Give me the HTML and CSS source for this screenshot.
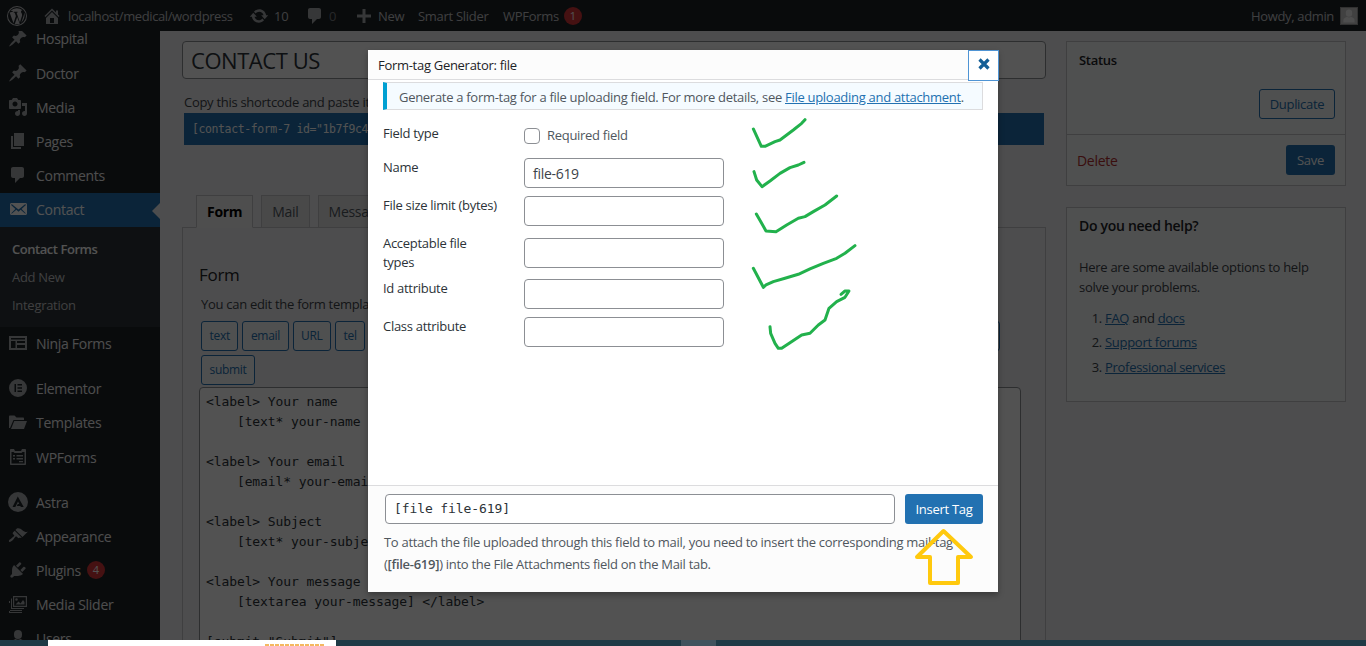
FILE: index.html
```html
<!DOCTYPE html>
<html lang="en">
<head>
<meta charset="utf-8">
<title>Edit Contact Form</title>
<link rel="stylesheet" href="styles.css">
</head>
<body>
<svg class="defs" aria-hidden="true">
  <symbol id="i-wp" viewBox="0 0 20 20"><path fill-rule="evenodd" d="M10 0a10 10 0 1 1 0 20a10 10 0 0 1 0-20zm0 1a9 9 0 1 0 0 18a9 9 0 0 0 0-18zM2.6 6.6l3.9 10.6L8.9 10 7.7 6.7l-1-.1v-.8h3.9v.8l-1 .1 3.3 9.8 2-6.3c.4-1.4.1-2.3-.4-3.1-.5-.8-.8-1.700.1-2.500.3-.3.6-.4.9-.4A9 9 0 0 0 3.500 4.900h2.300v.9l-1.100.1 0 0zM10.200 11l-2.400 7a8.800 8.800 0 0 0 5 -.1zM17.300 6.500c.6 2.500.3 4.800-.8 7l-2.300 3.400 2.200-6.300c.5-1.300.8-2.800.9-4.100z"/></symbol>
  <symbol id="i-home" viewBox="0 0 20 20"><path d="M16 8.500l1.530 1.530-1.060 1.060L10 4.620l-6.470 6.470-1.060-1.060L10 2.500l4 4v-2h2v4zm-6-2.460l6 5.990V18H4v-5.970zM12 17v-5H8v5h4z"/></symbol>
  <symbol id="i-update" viewBox="0 0 20 20"><path d="M10.200 3.280c3.530 0 6.430 2.610 6.920 6h2.080l-3.500 4-3.500-4h2.320c-.45-1.970-2.210-3.450-4.320-3.450-1.450 0-2.730.71-3.540 1.780L4.950 5.660C6.230 4.200 8.110 3.280 10.200 3.280zm-.4 13.440c-3.520 0-6.430-2.610-6.920-6H.8l3.500-4c1.170 1.330 2.330 2.670 3.500 4H5.480c.45 1.970 2.210 3.450 4.320 3.450 1.450 0 2.730-.71 3.540-1.780l1.710 1.950c-1.280 1.460-3.150 2.380-5.250 2.380z"/></symbol>
  <symbol id="i-comment" viewBox="0 0 20 20"><path d="M5 2h9c1.100 0 2 .9 2 2v7c0 1.100-.9 2-2 2h-2l-5 5v-5H5c-1.100 0-2-.9-2-2V4c0-1.100.9-2 2-2z"/></symbol>
  <symbol id="i-plus" viewBox="0 0 20 20"><path d="M17 8.500v3h-5.500V17h-3v-5.500H3v-3h5.500V3h3v5.500z"/></symbol>
  <symbol id="i-pin" viewBox="0 0 20 20"><path d="M10.440 3.020l1.820-1.820 6.360 6.350-1.830 1.820c-1.050-.68-2.480-.57-3.410.36l-.75.75c-.92.93-1.040 2.350-.35 3.410l-1.830 1.820-2.410-2.410-2.800 2.790c-.42.42-3.380 2.710-3.800 2.290s1.860-3.390 2.280-3.810l2.790-2.790L4.100 9.360l1.830-1.820c1.050.69 2.480.57 3.410-.36l.75-.75c.93-.92 1.050-2.350.35-3.410z"/></symbol>
  <symbol id="i-media" viewBox="0 0 20 20"><path d="M13 11V4c0-.55-.45-1-1-1h-1.670L9 1H5L3.670 3H2c-.55 0-1 .45-1 1v7c0 .55.45 1 1 1h10c.55 0 1-.45 1-1zM7 4.500c1.380 0 2.500 1.120 2.500 2.500S8.380 9.500 7 9.500 4.500 8.380 4.500 7 5.620 4.500 7 4.500zM14 6h5v10.500c0 1.380-1.120 2.500-2.500 2.500S14 17.880 14 16.500s1.120-2.500 2.500-2.500c.17 0 .34.020.5.050V9h-3V6zm-4 8.050V13h2v3.500c0 1.380-1.120 2.500-2.500 2.500S7 17.880 7 16.500 8.120 14 9.500 14c.17 0 .34.020.5.050z"/></symbol>
  <symbol id="i-page" viewBox="0 0 20 20"><path d="M6 15V2h10v13H6zm-1 1h8v2H3V5h2v11z"/></symbol>
  <symbol id="i-mail" viewBox="0 0 20 20"><path d="M19 14.500v-9c0-.83-.67-1.500-1.500-1.500H3.490c-.83 0-1.500.67-1.500 1.500v9c0 .83.67 1.500 1.500 1.500H17.500c.83 0 1.500-.67 1.500-1.500zm-1.310-9.110c.33.33.15.67-.03.84L13.600 9.950l3.900 4.060c.12.14.2.36.060.51-.13.16-.43.15-.56.050l-4.370-3.730-2.140 1.950-2.130-1.950-4.370 3.730c-.13.1-.43.11-.56-.05-.14-.15-.06-.37.060-.51l3.900-4.060-4.060-3.720c-.18-.17-.36-.51-.03-.84s.67-.17.95.070l6.240 5.040 6.250-5.040c.28-.24.62-.4.95-.07z"/></symbol>
  <symbol id="i-ninja" viewBox="0 0 20 20"><path fill-rule="evenodd" d="M1 3h18v14H1zM3 8v7h4.500V8zM9 8v2h8V8zM9 12v3h8v-3zM3 5v1.500h14V5z"/></symbol>
  <symbol id="i-elementor" viewBox="0 0 20 20"><path fill-rule="evenodd" d="M10 1a9 9 0 1 1 0 18a9 9 0 0 1 0-18zM6.500 6v8H8V6zM9.500 6v1.500H14V6zM9.500 9.200v1.600H14V9.200zM9.500 12.500V14H14v-1.500z"/></symbol>
  <symbol id="i-folder" viewBox="0 0 20 20"><path d="M1 16V4.500C1 4 1.400 3.500 2 3.500h4.500l2 2H15c.6 0 1 .4 1 1V8H5.500L2 16zM3 17l3.200-8H19l-3 8z"/></symbol>
  <symbol id="i-wpforms" viewBox="0 0 20 20"><path fill-rule="evenodd" d="M3 2h3l1 2h6l1-2h3c.6 0 1 .5 1 1v14c0 .6-.4 1-1 1H3c-.6 0-1-.4-1-1V3c0-.5.4-1 1-1zM3.500 5v11.500h13V5H14.500l-1 1H6.500l-1-1zM5 8h2v1.500H5zM8.500 8H15v1.500H8.500zM5 11h2v1.500H5zM8.500 11H15v1.500H8.500zM11 14h4v1.200h-4z"/></symbol>
  <symbol id="i-astra" viewBox="0 0 20 20"><path fill-rule="evenodd" d="M10 0a10 10 0 1 1 0 20a10 10 0 0 1 0-20zM9.800 4.500L4.500 15h2.800l2.700-5.600 1.300 2.600h-1.500l-1 2h3.500l.6 1h2.800z"/></symbol>
  <symbol id="i-brush" viewBox="0 0 20 20"><path d="M14.480 11.060L7.410 3.990l1.500-1.500c.5-.56 2.300-.47 3.510.32 1.210.8 1.430 1.280 2.910 2.100 1.180.64 2.450 1.260 4.450.85zm-.71.71L6.700 4.700 4.930 6.470c-.39.39-.39 1.020 0 1.410l1.060 1.060c.39.39.39 1.030 0 1.420-.6.6-1.430 1.110-2.210 1.690-.35.26-.7.53-1.010.84C1.430 13.230.4 14.980 1.100 15.680c.71.71 2.450-.32 3.790-1.670.31-.31.58-.66.85-1.020.57-.78 1.080-1.610 1.690-2.210.39-.39 1.020-.39 1.410 0l1.060 1.060c.39.39 1.020.39 1.410 0z"/></symbol>
  <symbol id="i-plug" viewBox="0 0 20 20"><path d="M13.110 4.360L9.870 7.600 8 5.730l3.240-3.240c.35-.34 1.050-.2 1.560.32.52.51.66 1.210.31 1.550zm-8 1.770l.91-1.120 9.010 9.010-1.190.84c-.71.71-2.630 1.160-3.820 1.160H6.140L4.900 17.260c-.59.59-1.540.59-2.120 0-.59-.58-.59-1.530 0-2.120l1.240-1.240v-3.880c0-1.130.4-3.190 1.090-3.890zm7.260 3.970l3.240-3.240c.34-.35 1.040-.21 1.550.31.520.51.66 1.210.31 1.550l-3.240 3.250z"/></symbol>
  <symbol id="i-slider" viewBox="0 0 20 20"><path fill-rule="evenodd" d="M5 2h14v11H5zM6.200 3.200v8.600h11.600V3.200zM7.500 10.500l3-3 2 2 2.500-3.500 1.500 2v2.500zM8.500 4.200a1.300 1.300 0 1 1 0 2.600a1.300 1.300 0 0 1 0-2.600zM3 4.500h1v9.500h12v1H3zM1 7h1v9h12v1H1zM1 9v10h13v-1H2V9z"/></symbol>
  <symbol id="i-user" viewBox="0 0 20 20"><path d="M10 2a4 4 0 0 1 4 4v1a4 4 0 0 1-8 0V6a4 4 0 0 1 4-4zM3 18v-3c0-2 3-3.500 4.500-4 1.500 1 3.500 1 5 0 1.500.5 4.500 2 4.500 4v3z"/></symbol>
</svg>

<div class="screen">
  <div class="app">
    <header class="adminbar">
      <div class="bar-left">
        <span class="bar-item bar-logo"><svg class="ico ico-20"><use href="#i-wp"/></svg></span>
        <span class="bar-item bar-site"><svg class="ico ico-20"><use href="#i-home"/></svg>localhost/medical/wordpress</span>
        <span class="bar-item bar-updates"><svg class="ico ico-20"><use href="#i-update"/></svg>10</span>
        <span class="bar-item bar-comments"><svg class="ico ico-20"><use href="#i-comment"/></svg><span class="muted">0</span></span>
        <span class="bar-item bar-new"><svg class="ico ico-20"><use href="#i-plus"/></svg>New</span>
        <span class="bar-item bar-slider">Smart Slider</span>
        <span class="bar-item">WPForms<span class="count count-bar">1</span></span>
      </div>
      <div class="bar-right">Howdy, admin<span class="avatar"><svg viewBox="0 0 20 20"><use href="#i-user"/></svg></span></div>
    </header>

    <div class="layout">
      <nav class="sidebar">
        <ul class="menu">
          <li class="menu-item"><svg class="ico ico-20"><use href="#i-pin"/></svg>Hospital</li>
          <li class="menu-item step"><svg class="ico ico-20"><use href="#i-pin"/></svg>Doctor</li>
          <li class="menu-item"><svg class="ico ico-20"><use href="#i-media"/></svg>Media</li>
          <li class="menu-item"><svg class="ico ico-20"><use href="#i-page"/></svg>Pages</li>
          <li class="menu-item"><svg class="ico ico-20"><use href="#i-comment"/></svg>Comments</li>
          <li class="menu-item current"><svg class="ico ico-20"><use href="#i-mail"/></svg>Contact</li>
          <li class="submenu">
            <span class="sub-link sub-on">Contact Forms</span>
            <span class="sub-link">Add New</span>
            <span class="sub-link">Integration</span>
          </li>
          <li class="menu-item"><svg class="ico ico-20"><use href="#i-ninja"/></svg>Ninja Forms</li>
          <li class="menu-item sep"><svg class="ico ico-20"><use href="#i-elementor"/></svg>Elementor</li>
          <li class="menu-item"><svg class="ico ico-20"><use href="#i-folder"/></svg>Templates</li>
          <li class="menu-item step"><svg class="ico ico-20"><use href="#i-wpforms"/></svg>WPForms</li>
          <li class="menu-item sep"><svg class="ico ico-20"><use href="#i-astra"/></svg>Astra</li>
          <li class="menu-item"><svg class="ico ico-20"><use href="#i-brush"/></svg>Appearance</li>
          <li class="menu-item"><svg class="ico ico-20"><use href="#i-plug"/></svg>Plugins<span class="count count-menu">4</span></li>
          <li class="menu-item"><svg class="ico ico-20"><use href="#i-slider"/></svg>Media Slider</li>
          <li class="menu-item"><svg class="ico ico-20"><use href="#i-user"/></svg>Users</li>
        </ul>
      </nav>

      <main class="content">
        <div class="editor">
          <div class="title-input">CONTACT US</div>
          <p class="shortcode-note">Copy this shortcode and paste it into your post, page, or text widget content:</p>
          <div class="shortcode">[contact-form-7 id="1b7f9c4" title="CONTACT US"]</div>
          <div class="tabs">
            <span class="tab tab-on">Form</span>
            <span class="tab">Mail</span>
            <span class="tab">Messages</span>
            <span class="tab">Additional Settings</span>
          </div>
          <section class="panel">
            <h2 class="panel-title">Form</h2>
            <p class="panel-note">You can edit the form template here. For details, see Editing form template.</p>
            <div class="tag-line">
              <span class="tag">text</span><span class="tag">email</span><span class="tag">URL</span><span class="tag">tel</span><span class="tag">number</span><span class="tag">date</span><span class="tag">text area</span><span class="tag">drop-down menu</span><span class="tag">checkboxes</span><span class="tag">radio buttons</span><span class="tag">acceptance</span><span class="tag">quiz</span><span class="tag tag-last">file</span>
            </div>
            <div class="tag-line">
              <span class="tag">submit</span>
            </div>
            <pre class="template">&lt;label&gt; Your name
    [text* your-name ] &lt;/label&gt;

&lt;label&gt; Your email
    [email* your-email] &lt;/label&gt;

&lt;label&gt; Subject
    [text* your-subject] &lt;/label&gt;

&lt;label&gt; Your message (optional)
    [textarea your-message] &lt;/label&gt;

[submit "Submit"]</pre>
          </section>
        </div>

        <aside class="side">
          <section class="box box-status">
            <h3 class="box-title">Status</h3>
            <div class="status-actions"><span class="btn-outline">Duplicate</span></div>
            <div class="status-foot"><span class="delete">Delete</span><span class="btn-save">Save</span></div>
          </section>
          <section class="box box-help">
            <h3 class="help-title">Do you need help?</h3>
            <p class="help-text">Here are some available options to help solve your problems.</p>
            <ol class="help-list">
              <li><a>FAQ</a> and <a>docs</a></li>
              <li><a>Support forums</a></li>
              <li><a>Professional services</a></li>
            </ol>
          </section>
        </aside>
      </main>
    </div>

    <div class="backdrop"></div>

    <div class="modal">
      <div class="modal-head">
        <span class="modal-title">Form-tag Generator: file</span>
        <span class="modal-close"><svg viewBox="0 0 20 20"><path d="M5.500 5.500L14.500 14.500M14.500 5.500L5.500 14.500"/></svg></span>
      </div>
      <div class="notice">Generate a form-tag for a file uploading field. For more details, see <a>File uploading and attachment</a>.</div>
      <div class="fields">
        <div class="field field-check"><span class="field-label">Field type</span><label class="check"><span class="checkbox"></span>Required field</label></div>
        <div class="field"><span class="field-label">Name</span><span class="text-input">file-619</span></div>
        <div class="field"><span class="field-label">File size limit (bytes)</span><span class="text-input"></span></div>
        <div class="field field-tall"><span class="field-label">Acceptable file types</span><span class="text-input"></span></div>
        <div class="field"><span class="field-label">Id attribute</span><span class="text-input"></span></div>
        <div class="field"><span class="field-label">Class attribute</span><span class="text-input"></span></div>
      </div>
      <div class="modal-foot">
        <div class="foot-row"><span class="tag-output">[file file-619]</span><span class="btn-insert">Insert Tag</span></div>
        <p class="foot-note">To attach the file uploaded through this field to mail, you need to insert the corresponding mail-tag (<strong>[file-619]</strong>) into the File Attachments field on the Mail tab.</p>
      </div>
    </div>

    <svg class="marks" viewBox="0 0 1366 640" aria-hidden="true">
      <g class="ticks" transform="translate(730 45) scale(.3333)">
        <polyline points="70,252 94,304 105,304 135,290 150,285 170,270 190,255 215,235 225,224"/>
        <polyline points="72,380 80,405 96,425 120,408 150,385 180,368 205,360 222,352"/>
        <polyline points="79,507 95,535 108,558 138,560 170,540 205,520 225,515 250,500 285,480 320,453"/>
        <polyline points="70,670 100,727 108,720 130,710 165,700 205,688 240,672 280,655 320,640 345,625 375,602"/>
        <polyline points="120,845 122,865 135,895 145,910 155,910 180,893 215,870 240,865 265,840 285,825 297,790 320,770 345,757 357,738 345,738 333,748"/>
      </g>
      <polygon class="arrow" points="943.500,531 971,557 958,557 958,583 930,583 930,557 917,557"/>
    </svg>
  </div>

  <footer class="taskbar">
    <div class="task-white"><span class="task-dots"></span></div>
    <div class="task-active"></div>
  </footer>
</div>
</body>
</html>
```

FILE: styles.css
```css
* { box-sizing: border-box; }
html, body { margin: 0; padding: 0; height: 100%; overflow: hidden; }
body { font-family: "Open Sans", "Noto Sans", sans-serif; font-size: 13px; color: #3c434a; background: #f0f0f1; letter-spacing: -.29px; }
.defs { display: none; }
.screen { display: flex; flex-direction: column; height: 646px; overflow: hidden; }
.app { position: relative; flex: 1; min-height: 0; overflow: hidden; background: #f0f0f1; }

.ico { fill: currentColor; flex: none; }
.ico-20 { width: 20px; height: 20px; }

/* Admin bar */
.adminbar { position: relative; z-index: 2; display: flex; justify-content: space-between; align-items: center; height: 31px; background: #1d2327; color: #c3c4c7; }
.bar-left { display: flex; align-items: center; }
.bar-item { display: flex; align-items: center; white-space: nowrap; }
.bar-logo { padding-left: 7px; width: 42px; }
.bar-site { gap: 6px; width: 207px; letter-spacing: -.4px; }
.bar-site .ico, .bar-updates .ico, .bar-comments .ico, .bar-new .ico { color: #a7aaad; }
.bar-updates { gap: 5px; width: 56px; }
.bar-comments { gap: 4px; width: 49px; }
.bar-new { gap: 4px; width: 64px; }
.bar-slider { width: 85px; }
.muted { opacity: .55; }
.count { display: inline-block; border-radius: 50%; background: #d63638; color: #fff; text-align: center; font-size: 11px; letter-spacing: 0; }
.count-bar { width: 18px; height: 18px; line-height: 18px; margin-left: 5px; }
.count-menu { width: 18px; height: 18px; line-height: 18px; margin-left: -2px; }
.bar-right { display: flex; align-items: center; gap: 6px; padding-right: 8px; letter-spacing: -.35px; }
.avatar { display: block; width: 18px; height: 18px; background: #c9c9c9; color: #f2f2f2; border: 1px solid #999; }
.avatar svg { display: block; width: 100%; height: 100%; fill: currentColor; }

/* Sidebar */
.layout { display: flex; height: 615px; }
.sidebar { flex: none; width: 160px; background: #1d2327; color: #f0f0f1; font-size: 14px; overflow: visible; }
.menu { list-style: none; margin: -9px 0 0; padding: 0; }
.menu-item { position: relative; display: flex; align-items: center; height: 34px; padding: 0 0 2px 8px; gap: 8px; white-space: nowrap; }
.menu-item .ico { color: #a7aaad; }
.step { margin-top: 1px; }
.sep { margin-top: 11px; }
.current { background: #2271b1; color: #fff; }
.current .ico { color: #fff; }
.current::after { content: ""; position: absolute; right: 0; top: 10px; border: 8px solid transparent; border-left-width: 0; border-right-color: #f0f0f1; }
.submenu { display: flex; flex-direction: column; height: 100px; padding-top: 8px; background: #2c3338; font-size: 13px; color: #c3c4c7; }
.sub-link { height: 28px; line-height: 28px; padding-left: 12px; }
.sub-on { color: #fff; font-weight: 600; letter-spacing: -.45px; }

/* Main */
.content { display: flex; flex: 1; min-width: 0; gap: 20px; padding: 10px 20px 0 22px; }
.editor { flex: none; width: 864px; }
.title-input { height: 38px; padding: 0 8px; line-height: 37px; border: 1px solid #8c8f94; border-radius: 4px; background: #fff; color: #2c3338; font-size: 22px; letter-spacing: -.45px; }
.shortcode-note { margin: 15px 0 0 2px; line-height: 17px; white-space: nowrap; overflow: hidden; }
.shortcode { height: 32px; margin: 2px 2px 0; padding: 0 8px; background: #2271b1; color: #fff; font: 11.500px/32px "DejaVu Sans Mono", monospace; letter-spacing: -.4px; }
.tabs { display: flex; gap: 8px; height: 33px; margin: 50px 0 0 14px; }
.tab { height: 33px; padding: 0 10px; line-height: 32px; border: 1px solid #c3c4c7; background: #e4e4e4; color: #50575e; font-size: 14px; white-space: nowrap; }
.tab-on { position: relative; z-index: 1; border-bottom-color: #f1f1f1; background: #f1f1f1; color: #000; font-weight: 700; }
.panel { height: 500px; margin-top: -1px; padding: 34px 16px 0; border: 1px solid #c3c4c7; }
.panel-title { margin: 0; font-size: 17px; font-weight: 400; line-height: 26px; color: #1d2327; }
.panel-note { margin: 7px 0 0 2px; line-height: 19px; white-space: nowrap; overflow: hidden; }
.tag-line { display: flex; gap: 4px; width: 799px; margin: 4px 0 0 2px; }
.panel-note + .tag-line { margin-top: 7px; }
.tag { height: 30px; padding: 0 7.500px; line-height: 27px; border: 1px solid #2271b1; border-radius: 3px; color: #2271b1; background: #f6f7f7; font-size: 12px; white-space: nowrap; }
.tag-last { flex: 1; }
.template { width: 822px; height: 300px; margin: 2px 0 0; padding: 4px 6px; border: 1px solid #8c8f94; border-radius: 4px; background: #fff; color: #2c3338; font: 13px/20px "DejaVu Sans Mono", monospace; letter-spacing: -.1px; }

/* Side boxes */
.side { flex: none; width: 280px; }
.box { border: 1px solid #c3c4c7; background: #f6f7f7; }
.box-status { height: 145px; }
.box-title { margin: 0; padding: 9px 12px 0; height: 28px; font-size: 13px; font-weight: 600; line-height: 18px; color: #1d2327; }
.status-actions { display: flex; justify-content: flex-end; height: 65px; padding: 19px 10px 0 0; border-bottom: 1px solid #c3c4c7; }
.btn-outline { width: 76px; height: 30px; text-align: center; line-height: 28px; border: 1px solid #2271b1; border-radius: 3px; color: #2271b1; }
.status-foot { display: flex; justify-content: space-between; align-items: center; padding: 10px 10px 0; }
.delete { color: #b32d2e; font-size: 14px; }
.btn-save { width: 49px; height: 30px; text-align: center; line-height: 30px; border-radius: 3px; background: #2271b1; color: #fff; }
.box-help { height: 195px; margin-top: 21px; padding: 0 12px; }
.help-title { margin: 8px 0 0; font-size: 14px; font-weight: 600; line-height: 19px; color: #1d2327; }
.help-text { margin: 22px 0 0; line-height: 20px; }
.help-list { margin: 10.900px 0 0; padding-left: 26px; }
.help-list li { height: 24.500px; line-height: 20px; }
.help-list a { color: #2271b1; text-decoration: underline; }

/* Overlay layers */
.backdrop { position: absolute; inset: 0; z-index: 3; background: rgba(0, 0, 0, .68); }
.marks { position: absolute; inset: 0; z-index: 5; width: 100%; height: 100%; pointer-events: none; }
.ticks polyline { fill: none; stroke: #22b14c; stroke-width: 9; stroke-linecap: round; stroke-linejoin: round; }
.arrow { fill: none; stroke: #ffc90e; stroke-width: 4; stroke-linejoin: round; }

/* Modal */
.modal { position: absolute; left: 368px; top: 50px; z-index: 4; display: flex; flex-direction: column; width: 630px; height: 542px; background: #fff; box-shadow: 0 3px 6px rgba(0, 0, 0, .3); }
.modal-head { display: flex; justify-content: space-between; height: 30px; background: #fcfcfc; border-bottom: 1px solid #dcdcde; }
.modal-title { padding-left: 10px; line-height: 31px; font-weight: 500; color: #1d2327; }
.modal-close { display: block; width: 31px; height: 31px; margin-right: -1px; border: 1px solid #4f94d4; background: #fff; }
.modal-close svg { display: block; width: 20px; height: 20px; margin: 3px 4.500px; fill: none; stroke: #135e96; stroke-width: 3.200; }
.notice { height: 28px; margin: 2px 15px 0; padding-left: 12px; line-height: 28px; border: 1px solid #dcdcde; border-left: 4px solid #00a0d2; background: #f5fbff; color: #50575e; white-space: nowrap; }
.notice a, .notice a:visited { color: #2271b1; text-decoration: underline; }
.fields { display: flex; flex-direction: column; gap: 8px; margin: 14px 0 0 15px; }
.field { display: grid; grid-template-columns: 141px 200px; align-items: start; }
.field-label { line-height: 19px; color: #2c3338; }
.field-check { height: 26px; }
.field-tall { align-items: center; height: 37px; }
.field-tall .field-label { max-width: 100px; }
.check { display: flex; align-items: center; gap: 7px; padding-top: 2px; color: #50575e; }
.checkbox { display: block; width: 16px; height: 16px; margin-top: 2px; border: 1px solid #8c8f94; border-radius: 4px; background: #fff; }
.text-input { display: block; height: 30px; padding: 0 8px; line-height: 29px; border: 1px solid #8c8f94; border-radius: 4px; background: #fff; color: #3c434a; font-size: 14px; }
.modal-foot { margin-top: auto; height: 107px; padding: 8px 15px 0 16px; background: #fcfcfc; border-top: 1px solid #dcdcde; }
.foot-row { display: flex; gap: 10px; padding-left: 1px; }
.tag-output { flex: 1; height: 30px; padding: 0 8px; border: 1px solid #8c8f94; border-radius: 4px; background: #fff; color: #2c3338; font: 13px/28px "DejaVu Sans Mono", monospace; letter-spacing: -.1px; }
.btn-insert { width: 78px; height: 30px; line-height: 30px; text-align: center; border-radius: 3px; background: #2271b1; color: #fff; }
.foot-note { margin: 7px 0 0; line-height: 22px; color: #50575e; }
.foot-note strong { font-weight: 600; }

/* Bottom strip */
.taskbar { position: relative; flex: none; height: 6px; background: #1e3a46; }
.task-white { position: absolute; left: 48px; top: 0; width: 288px; height: 6px; background: #fff; }
.task-dots { position: absolute; left: 217px; top: 4px; width: 60px; height: 2px; background: repeating-linear-gradient(90deg, #f4b860 0 4px, transparent 4px 5px); }
.task-active { position: absolute; left: 681px; top: 0; width: 35px; height: 6px; background: #40535e; }
```
